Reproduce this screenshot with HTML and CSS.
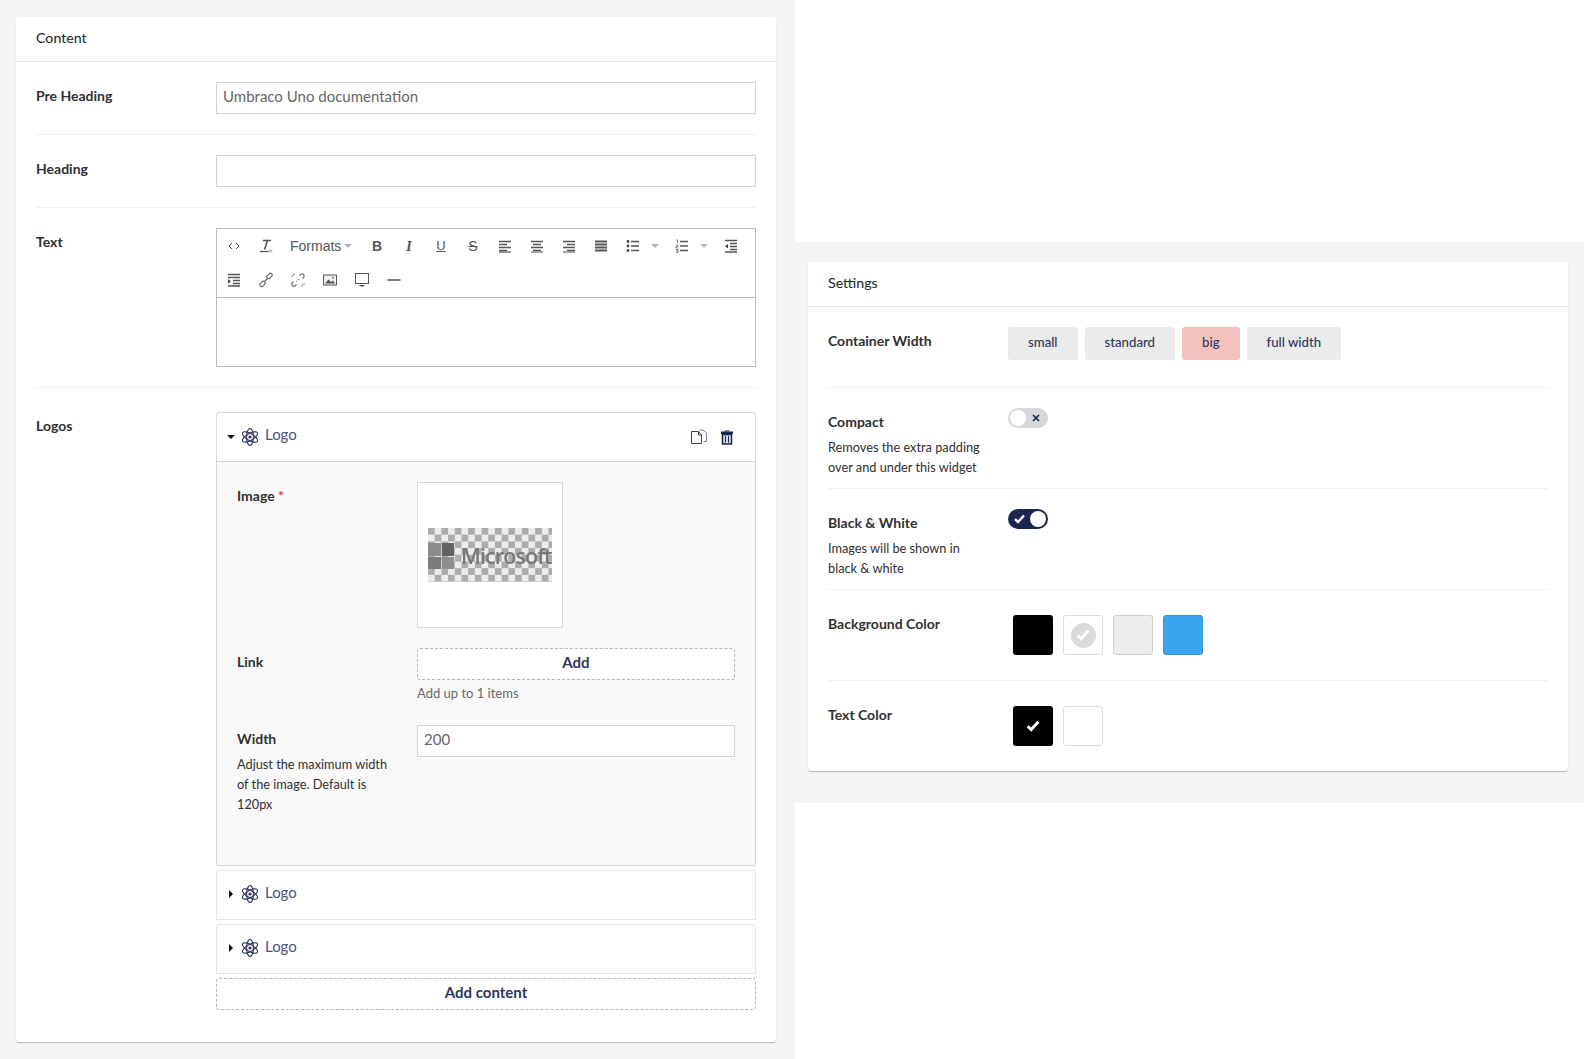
FILE: index.html
```html
<!DOCTYPE html>
<html lang="en">
<head>
<meta charset="utf-8">
<title>Umbraco block editor</title>
<link rel="stylesheet" href="styles.css">
</head>
<body>
<svg class="defs" width="0" height="0" aria-hidden="true">
  <defs>
    <g id="atom" fill="none" stroke="#2f3760" stroke-width="1.100">
      <ellipse cx="9" cy="9" rx="3.400" ry="8.500"/>
      <ellipse cx="9" cy="9" rx="3.400" ry="8.500" transform="rotate(60 9 9)"/>
      <ellipse cx="9" cy="9" rx="3.400" ry="8.500" transform="rotate(120 9 9)"/>
      <circle cx="9" cy="9" r="1.600" fill="#2f3760" stroke="none"/>
    </g>
    <path id="tick" d="M1 5.2 L4 8 L10 1.5" fill="none" stroke-width="2.4"/>
  </defs>
</svg>
<main class="page">
  <section class="pane-left">
    <div class="card">
      <h2 class="card-title">Content</h2>
      <div class="card-body">
        <div class="row row-sep">
          <label class="label">Pre Heading</label>
          <div class="control"><div class="input">Umbraco Uno documentation</div></div>
        </div>
        <div class="row row-sep">
          <label class="label">Heading</label>
          <div class="control"><div class="input"></div></div>
        </div>
        <div class="row row-sep">
          <label class="label">Text</label>
          <div class="control">
            <div class="rte">
              <div class="toolbar">
                <svg class="tb" viewBox="0 0 16 16"><path d="M6 5 L3 8 L6 11 M10 5 L13 8 L10 11" fill="none" stroke="#555" stroke-width="1"/></svg>
                <svg class="tb" viewBox="0 0 16 16"><path d="M5 2.5h8M9.5 2.5 L6.5 11.5" fill="none" stroke="#555" stroke-width="1.6"/><path d="M2 13.5h8.5" stroke="#555" stroke-width="1.3"/><path d="M11 11.5l3 3M14 11.5l-3 3" stroke="#777" stroke-width=".8"/></svg>
                <span class="formats">Formats<i class="caret"></i></span>
                <span class="tb tb-b">B</span>
                <span class="tb tb-i">I</span>
                <span class="tb tb-u">U</span>
                <span class="tb tb-s">S</span>
                <svg class="tb" viewBox="0 0 16 16"><path d="M2 3h12M2 6h8M2 9h12M2 12h8" transform="translate(0 .5)" stroke="#555" stroke-width="1.700"/><path d="M2 14h12" stroke="#555" stroke-width="1.200"/></svg>
                <svg class="tb" viewBox="0 0 16 16"><path d="M2 3.500h12M4 6.500h8M2 9.500h12M4 12.500h8" stroke="#555" stroke-width="1.700"/><path d="M2 14h12" stroke="#555" stroke-width="1"/></svg>
                <svg class="tb" viewBox="0 0 16 16"><path d="M2 3.500h12M6 6.500h8M2 9.500h12M6 12.500h8" stroke="#555" stroke-width="1.700"/><path d="M2 14h12" stroke="#555" stroke-width="1"/></svg>
                <svg class="tb" viewBox="0 0 16 16"><path d="M2 3.500h12M2 6.500h12M2 9.500h12M2 12.500h12" stroke="#555" stroke-width="1.900"/></svg>
                <svg class="tb" viewBox="0 0 16 16"><path d="M6 3.500h8M6 8h8M6 12.500h8" stroke="#555" stroke-width="1.400"/><circle cx="3" cy="3.500" r="1.400" fill="#444"/><circle cx="3" cy="8" r="1.400" fill="#444"/><circle cx="3" cy="12.500" r="1.400" fill="#444"/></svg>
                <i class="caret caret-tb"></i>
                <svg class="tb" viewBox="0 0 16 16"><path d="M6 3.500h8M6 8h8M6 12.500h8" stroke="#555" stroke-width="1.400"/><path d="M2 2h1.500v3M2 7h2v1.500H2V10h2M2 11.500h2v3H2M2 13h2" fill="none" stroke="#555" stroke-width=".7"/></svg>
                <i class="caret caret-tb"></i>
                <svg class="tb" viewBox="0 0 16 16"><path d="M2 2.500h12M7 5.500h7M7 8.500h7M7 11.500h7M2 14h12" stroke="#555" stroke-width="1.600"/><path d="M5 6 L2 8.300 L5 10.500Z" fill="#444"/></svg>
                <svg class="tb" viewBox="0 0 16 16"><path d="M2 2.500h12M2 5.500h12M7 8.500h7M7 11.500h7M2 14h12" stroke="#555" stroke-width="1.600"/><path d="M2 7 L5 9.300 L2 11.500Z" fill="#444"/></svg>
                <svg class="tb" viewBox="0 0 16 16"><g fill="none" stroke="#666" stroke-width="1.100"><rect x="8.500" y="2" width="6" height="3.800" rx="1.900" transform="rotate(-45 11.500 3.900)"/><rect x="1.500" y="10" width="6" height="3.800" rx="1.900" transform="rotate(-45 4.500 11.900)"/><path d="M6 10 L10 6"/></g></svg>
                <svg class="tb" viewBox="0 0 16 16"><g fill="none" stroke="#666" stroke-width="1.100"><path d="M9.500 3.500 L11 2 a2.300 2.300 0 0 1 3 3 L12.500 6.500"/><path d="M6.500 12.500 L5 14 a2.300 2.300 0 0 1 -3 -3 L3.500 9.500"/><path d="M6.500 9.500 L9.500 6.500" stroke-dasharray="1 1"/></g><path d="M4 1v2.500M1 4h2.500M12 15v-2.500M15 12h-2.500" stroke="#777" stroke-width=".9"/></svg>
                <svg class="tb" viewBox="0 0 16 16"><rect x="1.500" y="3" width="13" height="10" fill="#eee" stroke="#555" stroke-width="1"/><path d="M3 11.500 L6.500 7.500 L9 10 L11 8.500 L13 11.500Z" fill="#555"/><circle cx="11" cy="5.800" r="1" fill="#777"/></svg>
                <svg class="tb" viewBox="0 0 16 16"><rect x="1.500" y="1.500" width="13" height="10" fill="none" stroke="#555" stroke-width="1"/><path d="M4.500 13h7L8 15Z" fill="#555"/></svg>
                <svg class="tb" viewBox="0 0 16 16"><path d="M1.500 8h13" stroke="#444" stroke-width="1.400"/></svg>
              </div>
              <div class="rte-area"></div>
            </div>
          </div>
        </div>
        <div class="row row-logos">
          <label class="label">Logos</label>
          <div class="control">
            <div class="block block-open">
              <div class="block-head">
                <i class="arrow-down"></i>
                <svg class="atom" viewBox="0 0 18 18"><use href="#atom"/></svg>
                <span class="block-name block-name-open">Logo</span>
                <div class="block-actions">
                  <svg class="act" viewBox="0 0 18 18"><path d="M1.500 3.500h7l3 3.500v8.500h-10Z M8.500 3.500v3.500h3" fill="#fff" stroke="#3a4268" stroke-width="1"/><path d="M9 2h4l3.500 3v8.500h-3" fill="none" stroke="#7a80a0" stroke-width="1"/></svg>
                  <svg class="act" viewBox="0 0 18 18"><path d="M6.500 2.500h5v1h-5z" fill="#1b264f"/><rect x="3" y="3.500" width="12" height="2.500" fill="#1b264f"/><path d="M4.500 6.500h9v9.500h-9Z" fill="#d8dae3" stroke="#1b264f" stroke-width="1.500"/><path d="M7.500 8v6.500M10.500 8v6.500" stroke="#1b264f" stroke-width="1"/></svg>
                </div>
              </div>
              <div class="block-body">
                <div class="sub-row">
                  <label class="label">Image <span class="req">*</span></label>
                  <div class="thumb">
                    <div class="logo-img">
                      <span class="ms-squares"><i class="s1"></i><i class="s2"></i><i class="s3"></i><i class="s4"></i></span>
                      <span class="ms-word">Microsoft</span>
                    </div>
                  </div>
                </div>
                <div class="sub-row sub-link">
                  <label class="label">Link</label>
                  <div class="sub-ctrl">
                    <button class="add add-small" type="button">Add</button>
                    <div class="hint">Add up to 1 items</div>
                  </div>
                </div>
                <div class="sub-row sub-width">
                  <div class="sub-label">
                    <label class="label">Width</label>
                    <p class="desc">Adjust the maximum width of the image. Default is 120px</p>
                  </div>
                  <div class="sub-ctrl"><div class="input">200</div></div>
                </div>
              </div>
            </div>
            <div class="block">
              <div class="block-head block-closed">
                <i class="arrow-right"></i>
                <svg class="atom" viewBox="0 0 18 18"><use href="#atom"/></svg>
                <span class="block-name">Logo</span>
              </div>
            </div>
            <div class="block">
              <div class="block-head block-closed">
                <i class="arrow-right"></i>
                <svg class="atom" viewBox="0 0 18 18"><use href="#atom"/></svg>
                <span class="block-name">Logo</span>
              </div>
            </div>
            <button class="add add-content" type="button">Add content</button>
          </div>
        </div>
      </div>
    </div>
  </section>
  <section class="pane-right">
    <div class="pane-right-band">
      <div class="card">
        <h2 class="card-title">Settings</h2>
        <div class="card-body">
          <div class="row row-sep row-s1">
            <label class="label">Container Width</label>
            <div class="pills">
              <span class="pill">small</span>
              <span class="pill">standard</span>
              <span class="pill pill-on">big</span>
              <span class="pill">full width</span>
            </div>
          </div>
          <div class="row row-sep row-s2">
            <div class="set-label">
              <label class="label">Compact</label>
              <p class="desc">Removes the extra padding over and under this widget</p>
            </div>
            <div class="toggle">
              <i class="knob"></i>
              <svg class="tx" viewBox="0 0 8 8"><path d="M1 1l6 6M7 1l-6 6" stroke="#1b264f" stroke-width="1.700"/></svg>
            </div>
          </div>
          <div class="row row-sep row-s2">
            <div class="set-label">
              <label class="label">Black &amp; White</label>
              <p class="desc">Images will be shown in black &amp; white</p>
            </div>
            <div class="toggle toggle-on">
              <svg class="tk" viewBox="0 0 11 10"><use href="#tick" stroke="#fff"/></svg>
              <i class="knob"></i>
            </div>
          </div>
          <div class="row row-sep row-s3">
            <label class="label">Background Color</label>
            <div class="swatches">
              <span class="sw sw-black"></span>
              <span class="sw sw-white"><i class="sw-disc"><svg viewBox="0 0 11 10"><use href="#tick" stroke="#fff"/></svg></i></span>
              <span class="sw sw-grey"></span>
              <span class="sw sw-blue"></span>
            </div>
          </div>
          <div class="row row-s4">
            <label class="label">Text Color</label>
            <div class="swatches">
              <span class="sw sw-black"><svg class="sw-tick" viewBox="0 0 11 10"><use href="#tick" stroke="#fff"/></svg></span>
              <span class="sw sw-white"></span>
            </div>
          </div>
        </div>
      </div>
    </div>
  </section>
</main>
</body>
</html>
```
FILE: styles.css
```css
* { box-sizing: border-box; }
html, body { margin: 0; padding: 0; height: 1059px; overflow: hidden; background: #fff; }
body { font-family: Lato, "Open Sans", sans-serif; font-size: 14px; color: #303033; }
.defs { position: absolute; }
.page { display: flex; height: 1059px; }
.pane-left { width: 795px; height: 1059px; background: #f5f3f3; padding: 17px 19px 0 16px; flex: none; }
.pane-right { flex: 1; padding-top: 242px; }
.pane-right-band { background: #f5f3f3; padding: 20px 16px 32px 13px; height: 561px; }

.card { background: #fff; border-radius: 3px; box-shadow: 0 1px 1px rgba(0,0,0,.25); }
.card-title { margin: 0; height: 45px; padding: 0 20px; font-size: 14.2px; font-weight: 400; line-height: 42px; color: #222; border-bottom: 1px solid #e9e9eb; }
.card-body { padding: 0 20px; }
.pane-left .card { height: 1025px; }
.pane-right .card { height: 509px; }

.row { display: flex; padding-top: 20px; }
.row-sep { border-bottom: 1px solid #f1f1f2; padding-bottom: 20px; }
.label { display: block; font-weight: 700; font-size: 14px; line-height: 20px; color: #303033; }
.row > .label { width: 180px; flex: none; margin-top: 4px; }
.control { flex: 1; min-width: 0; }
.input { height: 32px; border: 1px solid #d4d4d6; background: #fff; padding: 0 6px; font-size: 15px; line-height: 26px; color: #666; }

.rte { border: 1px solid #bbbabf; }
.toolbar { display: flex; flex-wrap: wrap; align-items: center; align-content: flex-start; height: 69px; padding: 0 1px; border-bottom: 1px solid #bbbabf; }
.tb { width: 32px; height: 34px; padding: 9px 8px; flex: none; display: block; font-family: "Liberation Sans", sans-serif; font-size: 14px; line-height: 16px; text-align: center; color: #555; }
.tb-b { font-weight: 700; }
.tb-i { font-family: "Liberation Serif", serif; font-style: italic; font-weight: 700; font-size: 15px; }
.tb-u { text-decoration: underline; font-size: 13px; }
.tb-s { text-decoration: line-through; }
.formats { display: flex; align-items: center; width: 79px; padding-left: 8px; font-family: "Liberation Sans", sans-serif; font-size: 14px; color: #555; flex: none; }
.caret { display: block; width: 0; height: 0; border-left: 4px solid transparent; border-right: 4px solid transparent; border-top: 4px solid #b4b6bd; margin-left: 3px; }
.caret-tb { margin: 0 7px 0 2px; flex: none; }
.rte-area { height: 68px; }

.row-logos { padding-top: 24px; }
.block { border: 1px solid #e6e6e8; border-radius: 3px 3px 0 0; margin-bottom: 4px; background: #fff; }
.block-open { border-color: #d8d8da; }
.block-head { display: flex; align-items: center; height: 49px; padding: 0 19px 0 10px; border-bottom: 1px solid #d8d8da; color: #4a5278; }
.block-closed { height: 48px; border-bottom: 0; padding-bottom: 3px; }
.arrow-down { width: 0; height: 0; border-left: 4px solid transparent; border-right: 4px solid transparent; border-top: 4px solid #111; margin-right: 6px; }
.arrow-right { width: 0; height: 0; border-top: 4px solid transparent; border-bottom: 4px solid transparent; border-left: 4px solid #111; margin: 0 8px 0 2px; }
.atom { width: 18px; height: 18px; margin: 0 6px 0 0; }
.block-name { font-size: 15px; margin-top: -4px; }
.block-name-open { margin-top: -6px; }
.block-actions { margin-left: auto; display: flex; gap: 10px; }
.act { width: 18px; height: 18px; display: block; }
.block-body { height: 403px; background: #f9f9f9; padding: 20px 20px 0; }
.sub-row { display: flex; }
.sub-row > .label { width: 180px; flex: none; margin-top: 4px; }
.sub-ctrl { flex: 1; }
.req { color: #e22c60; }
.thumb { width: 146px; height: 146px; background: #fff; border: 1px solid #d8d8da; display: flex; align-items: center; }
.logo-img { display: flex; align-items: center; gap: 7px; width: 124px; height: 54px; margin-left: 10px; padding-top: 1px; overflow: hidden;
  background: repeating-conic-gradient(#ececec 0 25%, #acacac 0 50%) 0 0 / 13.400px 13.400px; }
.ms-squares { display: grid; grid-template-columns: 13px 12px; grid-template-rows: 13px 12px; gap: 1px; flex: none; filter: blur(.5px); }
.ms-squares i { display: block; }
.s1 { background: #8b8b8b; }
.s2 { background: #626262; }
.s3 { background: #7b7b7b; }
.s4 { background: #8e8e8e; }
.ms-word { font-family: "Open Sans", sans-serif; font-size: 21.500px; font-weight: 600; letter-spacing: -.9px; line-height: 26px; color: #787878; white-space: nowrap; filter: blur(.6px); }
.sub-link { margin-top: 20px; }
.add { display: block; width: 100%; border: 1px dashed #b5b5b8; border-radius: 3px; background: #fff; font-family: Lato, sans-serif; font-size: 15px; font-weight: 700; color: #2d3561; padding: 0 0 5px; }
.add-small { height: 32px; }
.add-content { height: 32px; }
.hint { font-size: 13px; line-height: 20px; margin-top: 3px; color: #68676b; }
.sub-width { margin-top: 22px; }
.sub-label { width: 180px; flex: none; padding-top: 4px; }
.sub-label .desc { width: 155px; margin-top: 5px; }
.desc { margin: 5px 0 0; font-size: 12.750px; line-height: 20px; color: #303033; }

.row-s1 { height: 81px; padding-top: 20px; }
.row-s2 { height: 101px; padding-top: 20px; }
.row-s3 { height: 91px; padding-top: 25px; }
.row-s4 { padding-top: 25px; }
.set-label { width: 180px; flex: none; padding-right: 20px; padding-top: 4px; }
.row-s3 > .label, .row-s4 > .label { margin-top: -1px; }
.pills { display: flex; gap: 7px; }
.pill { height: 33px; padding: 0 20px; background: #ebebec; border-radius: 3px; font-size: 13.200px; font-weight: 500; line-height: 31px; color: #2d3561; }
.pill-on { background: #f5c1bc; }
.toggle { position: relative; width: 40px; height: 20px; border-radius: 10px; background: #d8d7d9; flex: none; }
.toggle .knob { position: absolute; left: 2px; top: 2px; width: 16px; height: 16px; border-radius: 50%; background: #fff; }
.tx { position: absolute; right: 8px; top: 6px; width: 8px; height: 8px; }
.toggle-on { background: #1b264f; }
.toggle-on .knob { left: 22px; }
.tk { position: absolute; left: 6px; top: 5px; width: 11px; height: 10px; }
.swatches { display: flex; gap: 10px; margin-left: 5px; }
.sw { display: flex; align-items: center; justify-content: center; width: 40px; height: 40px; border-radius: 3px; flex: none; }
.sw-black { background: #000; }
.sw-white { background: #fff; border: 1px solid #dcdcde; }
.sw-grey { background: #ededed; border: 1px solid #cfcfcf; }
.sw-blue { background: #3ba4ee; border: 1px solid #3492d5; }
.sw-disc { display: flex; align-items: center; justify-content: center; width: 25px; height: 25px; border-radius: 50%; background: #dadada; }
.sw-disc svg { width: 14px; height: 12px; }
.sw-tick { width: 14px; height: 12px; }
```
